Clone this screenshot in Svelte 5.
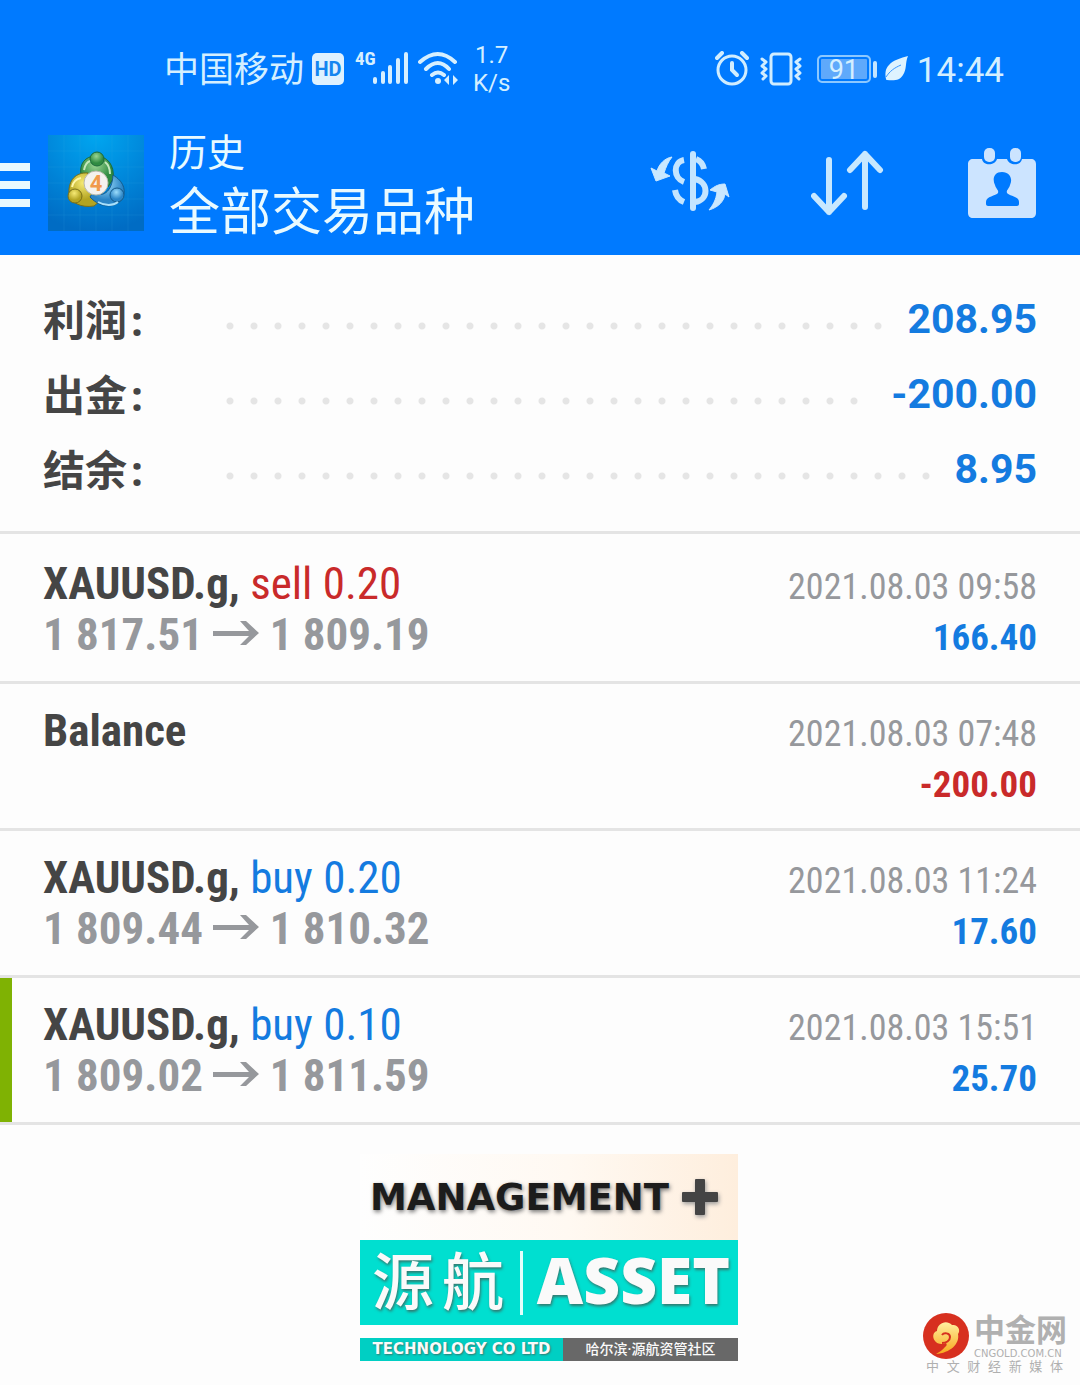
<script lang="ts">
	interface SummaryItem {
		label: string;
		value: string;
	}

	interface Deal {
		symbol: string;
		side?: 'buy' | 'sell';
		volume?: string;
		open?: string;
		close?: string;
		time: string;
		amount: string;
		deposit?: boolean;
	}

	const summary: SummaryItem[] = [
		{ label: '利润', value: '208.95' },
		{ label: '出金', value: '-200.00' },
		{ label: '结余', value: '8.95' }
	];

	const deals: Deal[] = [
		{
			symbol: 'XAUUSD.g',
			side: 'sell',
			volume: '0.20',
			open: '1 817.51',
			close: '1 809.19',
			time: '2021.08.03 09:58',
			amount: '166.40'
		},
		{ symbol: 'Balance', time: '2021.08.03 07:48', amount: '-200.00' },
		{
			symbol: 'XAUUSD.g',
			side: 'buy',
			volume: '0.20',
			open: '1 809.44',
			close: '1 810.32',
			time: '2021.08.03 11:24',
			amount: '17.60'
		},
		{
			symbol: 'XAUUSD.g',
			side: 'buy',
			volume: '0.10',
			open: '1 809.02',
			close: '1 811.59',
			time: '2021.08.03 15:51',
			amount: '25.70',
			deposit: true
		}
	];

	const tagline = [...'中文财经新媒体'];
</script>

<div class="screen">
	<header class="top">
		<div class="status">
			<div class="status__group">
				<span class="status__carrier">中国移动</span>
				<svg class="status__hd" width="32" height="32" viewBox="0 0 32 32" aria-hidden="true">
					<rect width="32" height="32" rx="5" fill="#def1ff" />
					<text x="16" y="23" text-anchor="middle">HD</text>
				</svg>
				<svg class="status__signal" width="54" height="44" viewBox="0 -4 54 44" aria-hidden="true">
					<text x="0" y="14">4G</text>
					<g stroke="#d6efff" stroke-width="4" stroke-linecap="round">
						<path d="M20 28v3M28 22v9M35 16v15M43 9v22M51 3v28" />
					</g>
				</svg>
				<svg class="status__wifi" width="40" height="36" viewBox="0 0 40 36" aria-hidden="true">
					<g fill="none" stroke="#d6efff" stroke-width="4" stroke-linecap="round">
						<path d="M2 11Q20 -5 37 11M8 18Q20 6 31 18M14 24Q20 19 26 24" />
					</g>
					<circle cx="20" cy="30" r="3" fill="#d6efff" />
					<path d="M26 29l5-5v10zM40 29l-5-5v10z" fill="#d6efff" />
				</svg>
				<span class="status__speed"><span>1.7</span><span>K/s</span></span>
			</div>
			<div class="status__group">
				<svg width="34" height="36" viewBox="0 0 34 36" fill="none" stroke="#d0edff" stroke-linecap="round" aria-hidden="true">
					<circle cx="17" cy="19" r="14" stroke-width="3" />
					<path d="M17 12v7l5 5" stroke-width="4" />
					<path d="M2 7l5-5M32 7l-5-5" stroke-width="4" />
				</svg>
				<svg class="status__vibrate" width="42" height="36" viewBox="0 0 42 36" fill="none" stroke="#d0edff" stroke-linejoin="round" stroke-linecap="round" aria-hidden="true">
					<rect x="11" y="3" width="20" height="30" rx="3" stroke-width="3" />
					<path d="M2 8l4 3-4 4 4 3-4 4 4 3-3 3M40 8l-4 3 4 4-4 3 4 4-4 3 3 3" stroke-width="3" />
				</svg>
				<span class="battery">91</span>
				<svg class="status__leaf" width="24" height="26" viewBox="0 0 24 26" aria-hidden="true">
					<path d="M23 0C16 2 8 4 4 9c-4 4-4 9-3 14 0 1 1 1 1 1 8 1 13 0 16-5 4-6 2-12 5-19z" fill="#def3ff" />
					<path d="M1 21C5 15 9 12 16 9" fill="none" stroke="#3a98ff" stroke-width="1" />
				</svg>
				<span class="status__clock">14:44</span>
			</div>
		</div>

		<div class="bar">
			<button class="bar__menu" type="button" aria-label="菜单">
				<svg width="30" height="44" viewBox="0 0 30 44" aria-hidden="true">
					<path d="M0 4h30M0 22h30M0 40h30" stroke="#e9f9ff" stroke-width="8" />
				</svg>
			</button>
			<svg class="bar__logo" width="96" height="96" viewBox="0 0 96 96" aria-hidden="true">
				<defs>
					<radialGradient id="tile" cx="50%" cy="0%" r="100%">
						<stop offset="0" stop-color="#00a6f0" />
						<stop offset="0.5" stop-color="#0089dc" />
						<stop offset="1" stop-color="#006cc4" />
					</radialGradient>
					<radialGradient id="green" cx="45%" cy="30%">
						<stop offset="0" stop-color="#9ad592" />
						<stop offset="1" stop-color="#2f8b41" />
					</radialGradient>
					<radialGradient id="yellow" cx="45%" cy="30%">
						<stop offset="0" stop-color="#f6ea75" />
						<stop offset="1" stop-color="#b3a422" />
					</radialGradient>
					<radialGradient id="blue" cx="45%" cy="30%">
						<stop offset="0" stop-color="#9bdcfb" />
						<stop offset="1" stop-color="#2b85c6" />
					</radialGradient>
				</defs>
				<rect width="96" height="96" fill="url(#tile)" />
				<path d="M16 0v96M32 0v96M48 0v96M64 0v96M80 0v96M0 16h96M0 32h96M0 48h96M0 64h96M0 80h96" stroke="#3fb4ee" stroke-opacity="0.15" />
				<g stroke-width="1">
					<path d="M33 40c-2-11 4-19 15-19s19 9 17 23l-5 8-24-6z" fill="url(#green)" stroke="#1c6b3c" />
					<path d="M40 38c-12-1-20 7-19 21 2 9 12 14 25 12l6-5-12-14z" fill="url(#yellow)" stroke="#796f19" />
					<path d="M65 40c10 6 14 15 9 24-6 9-21 10-32-2l3-5c9 6 19 1 20-17z" fill="url(#blue)" stroke="#155b8c" />
					<circle cx="49" cy="24" r="7" fill="url(#green)" stroke="#1c6b3c" />
					<circle cx="27" cy="61" r="7" fill="url(#yellow)" stroke="#796f19" />
					<circle cx="69" cy="60" r="7" fill="url(#blue)" stroke="#155b8c" />
				</g>
				<path d="M36 35c1-5 3-8 6-9M57 27c4 3 5 8 5 12" fill="none" stroke="#c4e8be" stroke-width="2" />
				<path d="M24 52c1-5 4-8 9-9" fill="none" stroke="#fff7a8" stroke-width="2" />
				<path d="M50 67c7 4 15 4 20 0" fill="none" stroke="#a9e0fb" stroke-width="2" />
				<circle cx="48" cy="48" r="12" fill="#f4f2ee" stroke="#b9b9ac" />
				<text x="48" y="56" text-anchor="middle">4</text>
			</svg>
			<h1 class="bar__title">
				<span class="bar__section">历史</span>
				<span class="bar__filter">全部交易品种</span>
			</h1>
			<nav class="bar__actions" aria-label="操作">
				<button type="button" aria-label="交易品种">
					<svg width="80" height="72" viewBox="0 3 80 72" fill="none" stroke="#c4e5ff" aria-hidden="true">
						<path d="M43 10v54" stroke-width="6" stroke-linecap="round" />
						<path d="M34 16c-11 2-11 18 0 22M25 46c1 7 4 10 9 12" stroke-width="6" />
						<path d="M46 15c5 2 7 5 8 10M45 35c14 3 14 21 0 23" stroke-width="6" />
						<path d="M22 13c-7 1-13 7-15 14l-6-3 5 13 14-5-6-3c2-6 4-11 8-16z" fill="#cae8ff" stroke="#cae8ff" stroke-width="1" />
						<path d="M59 66c10-3 15-9 16-16l4 3-4-13c-6 0-10 2-15 6l7 2c-1 8-4 13-8 18z" fill="#cae8ff" stroke="#cae8ff" stroke-width="1" />
					</svg>
				</button>
				<button type="button" aria-label="排序">
					<svg width="76" height="72" viewBox="2 5 76 72" fill="none" stroke="#c8e8ff" stroke-width="6" stroke-linecap="round" stroke-linejoin="round" aria-hidden="true">
						<path d="M20 18v52M5 54l15 16 15-16M56 65V12M41 28l15-16 15 16" />
					</svg>
				</button>
				<button type="button" aria-label="日期">
					<svg width="68" height="72" viewBox="0 0 68 72" aria-hidden="true">
						<path d="M5 12h9c1 7 13 7 15 0h10c2 7 14 7 15 0h9c3 0 5 2 5 5v49c0 3-2 5-5 5H5c-3 0-5-2-5-5V17c0-3 2-5 5-5z" fill="#cce4ff" />
						<rect x="16" y="1" width="11" height="14" rx="5" fill="#cce4ff" />
						<rect x="42" y="1" width="11" height="14" rx="5" fill="#cce4ff" />
						<path d="M34 25c8 0 11 7 8 13-1 4-4 5-3 8 2 3 12 3 12 9v2c0 1-1 2-2 2H20c-1 0-2-1-2-2v-2c0-6 10-6 12-9 1-3-2-4-3-8-3-6-1-13 7-13z" fill="#007aff" />
					</svg>
				</button>
			</nav>
		</div>
	</header>

	<main>
		<dl class="summary">
			{#each summary as item (item.label)}
				<div class="summary__row">
					<dt>{item.label}<span class="summary__colon">:</span></dt>
					<dd>{item.value}</dd>
				</div>
			{/each}
		</dl>

		<ul class="deals">
			{#each deals as deal (deal.time)}
				<li class="deal" class:deal--marked={deal.deposit}>
					<div class="deal__line">
						<div class="deal__title">
							<strong>{deal.symbol}{deal.side ? ',' : ''}</strong>
							{#if deal.side}
								<span class="deal__side deal__side--{deal.side}">{deal.side} {deal.volume}</span>
							{/if}
						</div>
						<time class="deal__time">{deal.time}</time>
					</div>
					<div class="deal__line">
						<div class="deal__prices">
							{#if deal.open}
								<span>{deal.open}</span>
								<svg width="46" height="30" viewBox="0 0 46 30" fill="#96989c" aria-label="→">
									<path d="M0 11h36L27 1h6l13 12-13 12h-6l9-9H0z" />
								</svg>
								<span>{deal.close}</span>
							{/if}
						</div>
						<div class="deal__amount" class:deal__amount--loss={deal.amount.startsWith('-')}>
							{deal.amount}
						</div>
					</div>
				</li>
			{/each}
		</ul>
	</main>

	<footer class="foot">
		<div class="banner">
			<div class="banner__head">
				<span>MANAGEMENT</span>
				<svg width="36" height="36" viewBox="0 0 36 36" aria-hidden="true">
					<path d="M14 0h8q1 0 1 1v12h12q1 0 1 1v8q0 1-1 1H23v12q0 1-1 1h-8q-1 0-1-1V23H1q-1 0-1-1v-8q0-1 1-1h12V1q0-1 1-1z" fill="#444444" />
				</svg>
			</div>
			<div class="banner__name">
				<span class="banner__cn"><span>源</span><span>航</span></span>
				<span class="banner__en">ASSET</span>
			</div>
			<div class="banner__strip">
				<span class="banner__company">TECHNOLOGY CO LTD</span>
				<span class="banner__group">哈尔滨·源航资管社区</span>
			</div>
		</div>

		<div class="watermark">
			<div class="watermark__brand">
				<svg width="46" height="46" viewBox="0 0 46 46" aria-hidden="true">
					<defs>
						<linearGradient id="gold" x1="0" y1="0" x2="0" y2="1">
							<stop offset="0" stop-color="#fff0a0" />
							<stop offset="1" stop-color="#f8a81c" />
						</linearGradient>
					</defs>
					<circle cx="23" cy="23" r="23" fill="#d7301f" />
					<path d="M13 41c3-2 7-4 9-7 2-1 2-3 1-4-4 2-9 1-11-2-3-4-2-9 2-10 0-7 9-12 15-6 6-1 9 5 6 9 2 10-8 19-22 20z" fill="url(#gold)" />
					<path d="M19 22c2-3 8-2 8 2s-4 6-8 6" fill="none" stroke="#d7301f" stroke-width="2" />
				</svg>
				<div class="watermark__names">
					<span class="watermark__cn">中金网</span>
					<span class="watermark__url">CNGOLD.COM.CN</span>
				</div>
			</div>
			<div class="watermark__tagline">
				{#each tagline as char}
					<span>{char}</span>
				{/each}
			</div>
		</div>
	</footer>
</div>

<style>
	:global(body) {
		background: #fdfdfd;
	}

	.screen {
		--blue: #007aff;
		--value: #147be0;
		--red: #c92a2a;
		--ink: #454545;
		--muted: #96989c;
		--line: #e4e4e4;
		font-family: Roboto, 'Noto Sans CJK SC', sans-serif;
		color: var(--ink);
	}

	button {
		display: flex;
		padding: 0;
		border: 0;
		background: none;
		cursor: pointer;
	}

	/* Header */
	.top {
		background: var(--blue);
		padding: 39px 0 0;
		color: #d4efff;
	}

	.status {
		display: flex;
		justify-content: space-between;
		align-items: center;
		height: 60px;
		padding: 0 76px 0 164px;
		font-size: 35px;
		line-height: 60px;
	}

	.status__group {
		display: flex;
		align-items: center;
	}

	.status__carrier,
	.status__clock {
		padding-top: 3px;
	}

	.status__hd {
		margin-left: 8px;
	}

	.status__hd text {
		font: 700 20px Roboto, sans-serif;
		fill: #1485f0;
	}

	.status__signal {
		margin-left: 11px;
	}

	.status__signal text {
		font: 700 19px 'Roboto Condensed', 'Liberation Sans Narrow', sans-serif;
		fill: #d6efff;
	}

	.status__wifi {
		margin-left: 9px;
	}

	.status__speed {
		display: flex;
		flex-direction: column;
		align-items: center;
		margin-left: 15px;
		font-size: 24px;
		line-height: 28px;
	}

	.status__vibrate {
		margin-left: 11px;
	}

	.battery {
		position: relative;
		width: 50px;
		height: 24px;
		margin-left: 15px;
		border: 2px solid #8cc8ff;
		border-radius: 5px;
		background: #5fa9fb;
		box-shadow: inset 0 0 0 2px var(--blue);
		font-size: 27px;
		line-height: 26px;
		text-align: center;
	}

	.battery::after {
		content: '';
		position: absolute;
		top: 4px;
		right: -8px;
		width: 4px;
		height: 17px;
		border-radius: 2px;
		background: #c4e5ff;
	}

	.status__leaf {
		margin-left: 14px;
	}

	.status__clock {
		margin-left: 8px;
	}

	.bar {
		display: flex;
		align-items: center;
		height: 145px;
		margin-top: 11px;
		padding-right: 44px;
	}

	.bar__menu {
		margin-right: 18px;
	}

	.bar__menu svg {
		margin-top: 4px;
	}

	.bar__logo {
		margin-right: 25px;
	}

	.bar__logo text {
		font: 700 22px Roboto, sans-serif;
		fill: #f19a4b;
	}

	.bar__title {
		flex: 1;
		display: flex;
		flex-direction: column;
		margin: 0;
		padding-top: 4px;
		color: #e9faff;
		font-weight: 400;
		white-space: nowrap;
	}

	.bar__section {
		font-size: 38px;
		line-height: 56px;
	}

	.bar__filter {
		font-size: 51px;
		line-height: 64px;
	}

	.bar__actions {
		display: flex;
		gap: 81px;
	}

	/* Summary */
	.summary {
		margin: 0;
		padding: 27px 43px 24px;
		border-bottom: 3px solid var(--line);
		font-size: 42px;
		font-weight: 700;
		line-height: 75px;
	}

	.summary__row {
		display: flex;
		height: 75px;
	}

	.summary__row dt {
		width: 175px;
	}

	.summary__colon {
		padding-left: 4px;
		font-family: 'Open Sans', sans-serif;
	}

	.summary__row dd {
		flex: 1;
		display: flex;
		margin: 0;
		color: var(--value);
		font-size: 41px;
	}

	.summary__row dd::before {
		content: '';
		flex: 1;
		margin-right: 18px;
		background: radial-gradient(circle at 12px 44px, #e5e5e5 3px, transparent 4px) 0 0 / 24px 75px repeat-x;
	}

	/* Deals */
	.deals {
		margin: 0;
		padding: 3px 0 0;
		list-style: none;
		font-family: 'Roboto Condensed', 'Liberation Sans Narrow', Roboto, sans-serif;
	}

	.deal {
		padding: 21px 43px;
		border-bottom: 3px solid var(--line);
	}

	.deal--marked {
		box-shadow: inset 12px 0 #7fb203;
	}

	.deal__line {
		display: flex;
		justify-content: space-between;
		align-items: baseline;
		height: 51px;
		font-size: 45px;
		line-height: 51px;
		white-space: nowrap;
	}

	.deal__side--sell {
		color: var(--red);
	}

	.deal__side--buy {
		color: var(--value);
	}

	.deal__prices {
		color: var(--muted);
		font-weight: 700;
	}

	/* keeps the baseline when a balance operation has no prices */
	.deal__prices::before {
		content: '\200b';
	}

	.deal__time {
		color: var(--muted);
		font-size: 36px;
	}

	.deal__amount {
		color: var(--value);
		font-size: 37px;
		font-weight: 700;
	}

	.deal__amount--loss {
		color: var(--red);
	}

	/* Footer */
	.foot {
		position: relative;
		display: flex;
		justify-content: center;
		padding: 29px 0 24px 18px;
	}

	.banner {
		width: 378px;
		color: #fafafa;
		white-space: nowrap;
	}

	.banner__head {
		display: flex;
		justify-content: space-between;
		align-items: center;
		height: 86px;
		padding: 0 20px 0 10px;
		box-sizing: border-box;
		background: linear-gradient(90deg, #fefefe, #fff9f2 55%, #feeedd);
		color: #1c1c1c;
		font: 700 37px 'DejaVu Sans', sans-serif;
		text-shadow: 1px 2px 4px #777777;
	}

	.banner__head svg {
		filter: drop-shadow(1px 2px 2px #999999);
	}

	.banner__name {
		display: flex;
		align-items: center;
		height: 85px;
		padding: 0 8px 0 12px;
		background: #00dfd0;
		text-shadow: 1px 2px 3px #33786f;
	}

	.banner__cn {
		flex: 1;
		display: flex;
		gap: 8px;
		padding-bottom: 10px;
		font: 500 62px/62px 'Noto Sans CJK SC', sans-serif;
	}

	.banner__en {
		padding: 0 0 6px 14px;
		border-left: 3px solid #e2fffb;
		font: 800 64px/58px 'Open Sans', sans-serif;
	}

	.banner__strip {
		display: flex;
		height: 23px;
		margin-top: 13px;
		line-height: 23px;
		text-align: center;
	}

	.banner__company {
		width: 203px;
		background: #00cfc3;
		font-family: 'DejaVu Sans', sans-serif;
		font-size: 15px;
		font-weight: 700;
		text-shadow: 1px 1px 2px #33786f;
	}

	.banner__group {
		flex: 1;
		background: #686868;
		font-size: 14px;
		font-weight: 500;
	}

	.watermark {
		position: absolute;
		right: 14px;
		bottom: 12px;
		width: 143px;
		color: #b0b0b0;
		line-height: 1;
		white-space: nowrap;
	}

	.watermark__brand {
		display: flex;
		gap: 5px;
	}

	.watermark__brand svg {
		flex: none;
	}

	.watermark__names {
		display: flex;
		flex-direction: column;
	}

	.watermark__cn {
		font-size: 31px;
		font-weight: 700;
		line-height: 36px;
	}

	.watermark__url {
		font-family: 'DejaVu Sans', sans-serif;
		font-size: 10px;
	}

	.watermark__tagline {
		display: flex;
		justify-content: space-between;
		padding: 1px 3px 0;
		font-size: 13px;
	}
</style>
